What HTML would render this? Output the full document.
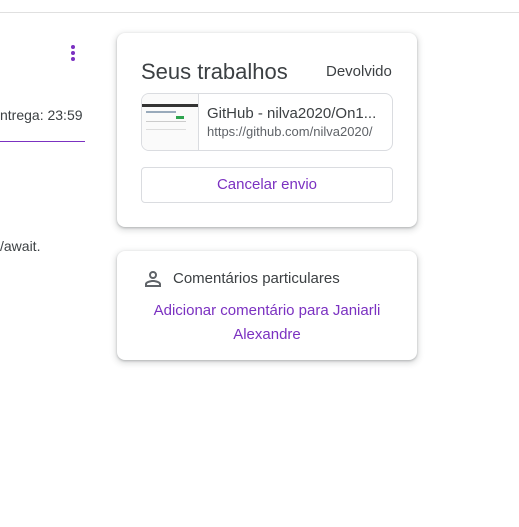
<!DOCTYPE html>
<html><head><style>
body{margin:0;width:519px;height:527px;background:#fff;font-family:"Liberation Sans",sans-serif;position:relative;overflow:hidden;color:#3c4043}
.a{position:absolute}
.card{position:absolute;background:#fff;border-radius:8px;box-shadow:0 1px 2px rgba(60,64,67,.3),0 2px 6px 2px rgba(60,64,67,.15)}
</style></head><body>
<div class="a" style="left:0;top:12px;width:519px;height:1px;background:#e0e0e0"></div>
<div class="a" style="left:71px;top:45px;width:4px;height:4px;border-radius:50%;background:#7b31c1;box-shadow:0 6px 0 #7b31c1,0 12px 0 #7b31c1"></div>
<div class="a" style="left:0;top:107px;font-size:14px;color:#3c4043">ntrega: 23:59</div>
<div class="a" style="left:0;top:141px;width:85px;height:1px;background:#7b31c1"></div>
<div class="a" style="left:0;top:238px;font-size:14px">/await.</div>

<div class="card" style="left:117px;top:33px;width:300px;height:194px">
 <div class="a" style="left:24px;top:26px;font-size:22px;color:#3c4043">Seus trabalhos</div>
 <div class="a" style="left:209px;top:30px;font-size:15px;color:#3c4043">Devolvido</div>
 <div class="a" style="left:24px;top:60px;width:250px;height:56px;border:1px solid #dadce0;border-radius:8px;overflow:hidden">
  <div class="a" style="left:0;top:0;width:56px;height:56px;border-right:1px solid #dadce0;background:#fafafa">
   <div class="a" style="left:0;top:10px;width:56px;height:3px;background:#333"></div>
   <div class="a" style="left:4px;top:17px;width:30px;height:2px;background:#9ab"></div>
   <div class="a" style="left:34px;top:22px;width:8px;height:3px;background:#2ea44f"></div>
   <div class="a" style="left:4px;top:27px;width:40px;height:1px;background:#ccc"></div>
   <div class="a" style="left:4px;top:35px;width:40px;height:1px;background:#ddd"></div>
  </div>
  <div class="a" style="left:65px;top:11px;font-size:15px;color:#3c4043;white-space:nowrap">GitHub - nilva2020/On1...</div>
  <div class="a" style="left:65px;top:30px;font-size:13px;color:#5f6368;white-space:nowrap">https://github.com/nilva2020/</div>
 </div>
 <div class="a" style="left:24px;top:134px;width:250px;height:34px;border:1px solid #dadce0;border-radius:4px;text-align:center;line-height:34px;font-size:15px;color:#7b31c1">Cancelar envio</div>
</div>

<div class="card" style="left:117px;top:251px;width:300px;height:109px">
 <svg class="a" style="left:24px;top:16px" width="24" height="24" viewBox="0 0 24 24"><path fill="#5f6368" d="M12 6a2 2 0 1 1 0 4 2 2 0 0 1 0-4m0 9c2.7 0 5.8 1.3 6 2v1H6v-1c.2-.7 3.3-2 6-2m0-11a4 4 0 1 0 0 8 4 4 0 0 0 0-8zm0 9c-2.7 0-8 1.3-8 4v3h16v-3c0-2.7-5.3-4-8-4z"/></svg>
 <div class="a" style="left:56px;top:19px;font-size:15px;color:#3c4043">Comentários particulares</div>
 <div class="a" style="left:0;top:48px;width:300px;text-align:center;font-size:15px;line-height:24px;color:#7b31c1">Adicionar comentário para Janiarli<br>Alexandre</div>
</div>
</body></html>
